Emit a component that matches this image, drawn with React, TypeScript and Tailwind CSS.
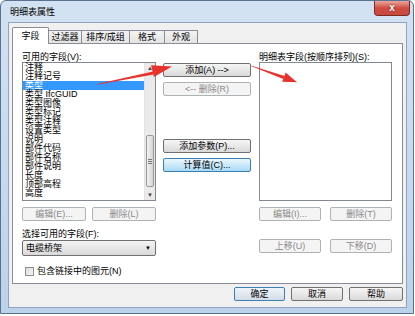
const font = "font-['Liberation_Sans','Noto_Sans_CJK_SC',sans-serif]";

function Btn({ label, w, kind = "normal", className = "" }: { label: string; w: string; kind?: "normal" | "disabled" | "hover" | "default"; className?: string }) {
  const look =
    kind === "disabled"
      ? "border-[#adb2b5] bg-[#f4f4f4] text-[#8a8a8a]"
      : kind === "hover"
        ? "border-[#3c7fb1] bg-gradient-to-b from-[#eaf6fd] to-[#a9dbf6] text-black"
        : kind === "default"
          ? "border-[#3c7fb1] bg-gradient-to-b from-[#eef4f9] to-[#d3dde8] text-black"
          : "border-[#707070] bg-gradient-to-b from-[#f6f6f6] to-[#d9d9d9] text-black";
  return (
    <div className={`${w} h-[14px] border rounded-[2px] flex items-center justify-center text-[9px] leading-[9px] whitespace-pre ${look} ${className}`}>
      {label}
    </div>
  );
}

const fields = [
  "注释",
  "注释记号",
  "类型",
  "类型 IfcGUID",
  "类型图像",
  "类型标记",
  "类型注释",
  "设置类型",
  "说明",
  "部件代码",
  "部件名称",
  "部件说明",
  "长度",
  "顶部高程",
  "高度",
];

function Arrows() {
  return (
    <svg className="absolute left-0 top-0 pointer-events-none" width="415" height="316">
      <polygon points="97,84 153,71.6 153.5,74.6 97,84.8" fill="#e8322e" />
      <polygon points="172,66.6 151.1,65.3 153.9,76.9" fill="#e8322e" />
      <polygon points="251,65.4 284.5,76 283.3,79 251,66" fill="#e8322e" />
      <polygon points="297,82.2 285.6,72.4 282.2,81.8" fill="#e8322e" />
    </svg>
  );
}

export default function App() {
  return (
    <div className={`relative w-[415px] h-[316px] bg-white overflow-hidden ${font}`}>
      <div className="w-[414px] h-[314px] flex flex-col border border-[#58728f] rounded-t-[6px] bg-gradient-to-b from-[#d3e2f2] to-[#bcd2ea]">
        {/* title bar */}
        <div className="h-[21px] flex items-start">
          <span className="ml-[9px] mt-[6px] text-[9px] leading-[10px] text-black">明细表属性</span>
          <div className="ml-auto mr-[3px] w-[36px] h-[15px] rounded-b-[4px] border border-t-0 border-[#7b2a24] bg-gradient-to-b from-[#e9a69c] via-[#cf4d42] to-[#c74a40] flex items-center justify-center">
            <span className="text-white font-bold text-[10px] leading-[10px] font-['Liberation_Sans',sans-serif] [text-shadow:0_0_2px_#5a1a16]">x</span>
          </div>
        </div>

        {/* client area */}
        <div className="ml-[7px] w-[399px] h-[286px] border border-[#8ea4bd] bg-[#f0f0f0] flex flex-col">
          {/* tabs */}
          <div className="mt-[4px] ml-[3px] h-[16px] flex items-end relative z-10 text-[9px] leading-[9px] text-black">
            <div className="w-[37px] h-[17px] -mb-px bg-white border border-b-0 border-[#898c95] rounded-t-[2px] flex items-center justify-center">字段</div>
            <div className="w-[34px] h-[13px] -ml-px border border-b-0 border-[#898c95] bg-gradient-to-b from-[#f3f3f3] to-[#e3e3e3] flex items-center justify-center">过滤器</div>
            <div className="w-[49px] h-[13px] -ml-px border border-b-0 border-[#898c95] bg-gradient-to-b from-[#f3f3f3] to-[#e3e3e3] flex items-center justify-center">排序/成组</div>
            <div className="w-[36px] h-[13px] -ml-px border border-b-0 border-[#898c95] bg-gradient-to-b from-[#f3f3f3] to-[#e3e3e3] flex items-center justify-center">格式</div>
            <div className="w-[34px] h-[13px] -ml-px border border-b-0 border-[#898c95] bg-gradient-to-b from-[#f3f3f3] to-[#e3e3e3] flex items-center justify-center">外观</div>
          </div>

          {/* tab page */}
          <div className="ml-[3px] w-[391px] h-[241px] border border-[#898c95] bg-white flex pt-[8px] pl-[9px] text-[9px] leading-[10px] text-black">
            {/* left column */}
            <div className="w-[134px] flex flex-col">
              <div className="h-[10px]">可用的字段(V):</div>
              <div className="h-[139px] border border-[#828790] flex">
                <div className="flex-1 flex flex-col">
                  {fields.map((f) => (
                    <div
                      key={f}
                      className={`h-[9px] leading-[9px] pl-[2px] whitespace-nowrap ${f === "类型" ? "bg-[#3399ff] text-white" : ""}`}
                    >
                      {f}
                    </div>
                  ))}
                </div>
                <div className="w-[11px] flex flex-col bg-[#eaeaea] border-l border-[#e2e2e2]">
                  <div className="h-[10px] flex items-center justify-center text-[6px] leading-[6px] text-[#444]">▲</div>
                  <div className="h-[62px]" />
                  <div className="h-[52px] mx-[1px] rounded-[2px] border border-[#979797] bg-gradient-to-r from-[#f2f2f2] to-[#d6d6d6] flex items-center justify-center">
                    <div className="flex flex-col gap-[1px]">
                      <div className="w-[4px] h-px bg-[#777]" />
                      <div className="w-[4px] h-px bg-[#777]" />
                      <div className="w-[4px] h-px bg-[#777]" />
                    </div>
                  </div>
                  <div className="h-[3px]" />
                  <div className="h-[10px] flex items-center justify-center text-[6px] leading-[6px] text-[#444]">▼</div>
                </div>
              </div>
              <div className="mt-[6px] flex justify-between">
                <Btn label="编辑(E)..." w="w-[64px]" kind="disabled" />
                <Btn label="删除(L)" w="w-[64px]" kind="disabled" />
              </div>
              <div className="mt-[8px] h-[10px]">选择可用的字段(F):</div>
              <div className="mt-[1px] h-[16px] border border-[#707070] rounded-[2px] bg-gradient-to-b from-[#f4f4f4] to-[#d9d9d9] flex items-center pl-[3px] pr-[4px]">
                <span>电缆桥架</span>
                <span className="ml-auto text-[6px] leading-[6px] text-black">▼</span>
              </div>
              <div className="mt-[10px] h-[10px] flex items-center pl-[3px]">
                <div className="w-[9px] h-[9px] border border-[#8f8f8f] bg-gradient-to-br from-[#dcdcdc] to-[#f6f6f6]" />
                <span className="ml-[3px]">包含链接中的图元(N)</span>
              </div>
            </div>

            {/* middle column */}
            <div className="ml-[7px] w-[88px] flex flex-col pt-[11px]">
              <Btn label="添加(A) -->" w="w-[88px]" />
              <Btn label="<-- 删除(R)" w="w-[88px]" kind="disabled" className="mt-[5px]" />
              <Btn label="添加参数(P)..." w="w-[88px]" className="mt-[43px]" />
              <Btn label="计算值(C)..." w="w-[88px]" kind="hover" className="mt-[5px]" />
            </div>

            {/* right column */}
            <div className="ml-[8px] w-[133px] flex flex-col">
              <div className="h-[10px] whitespace-nowrap">明细表字段(按顺序排列)(S):</div>
              <div className="h-[139px] border border-[#828790] bg-white" />
              <div className="mt-[6px] flex justify-between">
                <Btn label="编辑(I)..." w="w-[62px]" kind="disabled" />
                <Btn label="删除(T)" w="w-[62px]" kind="disabled" />
              </div>
              <div className="mt-[18px] flex justify-between">
                <Btn label="上移(U)" w="w-[62px]" kind="disabled" />
                <Btn label="下移(D)" w="w-[62px]" kind="disabled" />
              </div>
            </div>
          </div>

          {/* dialog buttons */}
          <div className="mt-[3px] mr-[3px] flex justify-end gap-[6px]">
            <Btn label="确定" w="w-[51px]" kind="default" />
            <Btn label="取消" w="w-[52px]" />
            <Btn label="帮助" w="w-[54px]" />
          </div>
        </div>
      </div>
      <Arrows />
    </div>
  );
}
